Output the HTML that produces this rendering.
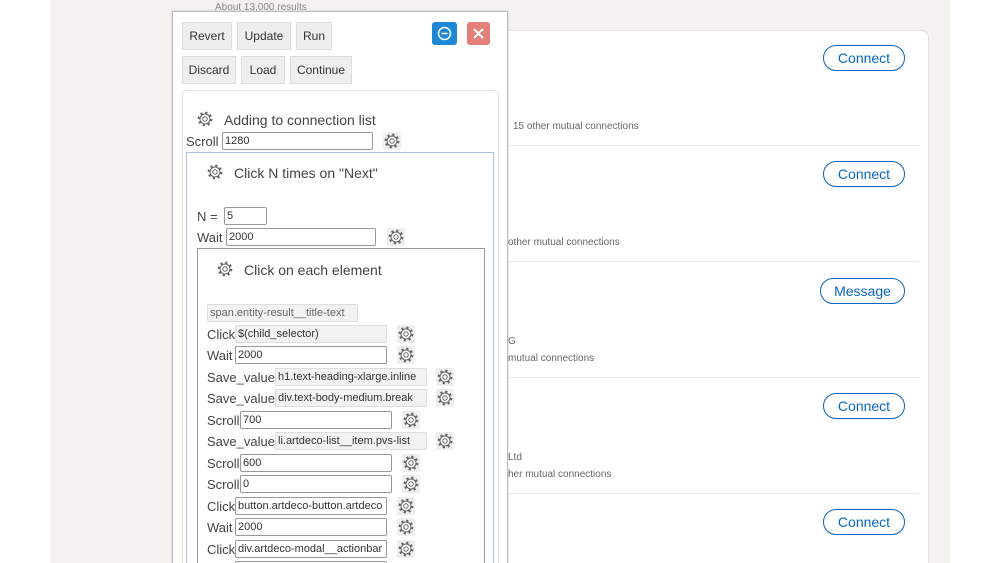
<!DOCTYPE html>
<html><head><meta charset="utf-8">
<style>
*{margin:0;padding:0;box-sizing:border-box}
html,body{width:1000px;height:563px;overflow:hidden}
body{background:#fff;position:relative;font-family:"Liberation Sans",sans-serif}
.a{position:absolute}
.bg{left:50px;top:0;width:900px;height:563px;background:#f3f2ef}
.card{left:180px;top:30px;width:749px;height:533px;background:#fff;border-radius:8px 8px 0 0;border:1px solid #e6e4e0;border-bottom:none}
.sep{height:1px;background:#e8e8e8;left:190px;width:729px}
.pill{border:1px solid #0a66c2;color:#0a66c2;border-radius:14px;font-size:14px;text-align:center;line-height:24px;height:26px}
.mut{font-size:10px;color:#666}
.panel{left:172px;top:11px;width:336px;height:560px;background:#fff;border:1px solid #bbb;box-shadow:0 0 2px rgba(0,0,0,.2)}
.btn{background:#eee;border:1px solid #ddd;font-size:12px;color:#333;text-align:center;line-height:26px;height:28px}
.t{font-size:13px;color:#444;white-space:nowrap}
.in{border:1px solid #999;height:18px;font-size:11px;color:#333;line-height:16px;padding-left:2px;background:#fff;overflow:hidden;white-space:nowrap;border-radius:2px}
.ing{background:#f2f2f2;border-color:#ddd}
.g{width:18px;height:18px;background:#eee;border-radius:2px}
</style></head><body>
<div class="a bg"></div>
<div class="a" style="left:215px;top:2px;font-size:10px;color:#888">About 13,000 results</div>
<div class="a card"></div>
<div class="a sep" style="top:145px"></div>
<div class="a sep" style="top:261px"></div>
<div class="a sep" style="top:377px"></div>
<div class="a sep" style="top:493px"></div>
<div class="a pill" style="left:823px;top:45px;width:82px">Connect</div>
<div class="a pill" style="left:823px;top:161px;width:82px">Connect</div>
<div class="a pill" style="left:820px;top:278px;width:85px">Message</div>
<div class="a pill" style="left:823px;top:393px;width:82px">Connect</div>
<div class="a pill" style="left:823px;top:509px;width:82px">Connect</div>
<div class="a mut" style="left:513px;top:121px">15 other mutual connections</div>
<div class="a mut" style="left:508px;top:237px">other mutual connections</div>
<div class="a mut" style="left:508px;top:336px">G</div>
<div class="a mut" style="left:508px;top:353px">mutual connections</div>
<div class="a mut" style="left:508px;top:452px">Ltd</div>
<div class="a mut" style="left:508px;top:469px">her mutual connections</div>

<div class="a panel"></div>
<svg width="0" height="0" style="position:absolute"><defs><g id="gear"><circle cx="9" cy="9" r="6.3" fill="none" stroke="#666" stroke-width="2.2" stroke-dasharray="2.2 2.75"/><circle cx="9" cy="9" r="5" fill="#fff" stroke="#666" stroke-width="1"/><circle cx="9" cy="9" r="2.2" fill="none" stroke="#666" stroke-width="1"/></g></defs></svg>
<div class="a btn" style="left:182px;top:22px;width:50px">Revert</div>
<div class="a btn" style="left:237px;top:22px;width:54px">Update</div>
<div class="a btn" style="left:296px;top:22px;width:36px">Run</div>
<div class="a btn" style="left:182px;top:56px;width:54px">Discard</div>
<div class="a btn" style="left:241px;top:56px;width:44px">Load</div>
<div class="a btn" style="left:290px;top:56px;width:62px">Continue</div>
<div class="a" style="left:432px;top:22px;width:25px;height:23px;background:#1e88d8;border-radius:3px"><svg width="25" height="23"><circle cx="12.5" cy="11.5" r="6" fill="none" stroke="#fff" stroke-width="1.5"/><line x1="9.5" y1="11.5" x2="15.5" y2="11.5" stroke="#fff" stroke-width="1.5"/></svg></div>
<div class="a" style="left:467px;top:22px;width:23px;height:23px;background:#e57f7a;border-radius:3px"><svg width="23" height="23"><path d="M7 7L16 16M16 7L7 16" stroke="#fff" stroke-width="2"/></svg></div>

<div class="a" style="left:182px;top:90px;width:317px;height:480px;border:1px solid #e4e4e4;border-radius:4px"></div>
<svg class="a" style="left:196px;top:110px" width="18" height="18"><use href="#gear"/></svg>
<div class="a t" style="left:224px;top:112px;font-size:14px">Adding to connection list</div>
<div class="a t" style="left:186px;top:134px">Scroll</div>
<div class="a in" style="left:222px;top:132px;width:151px">1280</div>
<div class="a g" style="left:383px;top:132px"><svg width="18" height="18"><use href="#gear"/></svg></div>

<div class="a" style="left:186px;top:152px;width:308px;height:420px;border:1px solid #a9c1e6"></div>
<svg class="a" style="left:206px;top:163px" width="18" height="18"><use href="#gear"/></svg>
<div class="a t" style="left:234px;top:165px;font-size:14px">Click N times on "Next"</div>
<div class="a t" style="left:197px;top:209px">N =</div>
<div class="a in" style="left:224px;top:207px;width:43px">5</div>
<div class="a t" style="left:197px;top:230px">Wait</div>
<div class="a in" style="left:226px;top:228px;width:150px">2000</div>
<div class="a g" style="left:387px;top:228px"><svg width="18" height="18"><use href="#gear"/></svg></div>

<div class="a" style="left:197px;top:248px;width:288px;height:330px;border:1px solid #999"></div>
<svg class="a" style="left:216px;top:260px" width="18" height="18"><use href="#gear"/></svg>
<div class="a t" style="left:244px;top:262px;font-size:14px">Click on each element</div>
<div class="a in ing" style="left:207px;top:304px;width:151px;color:#666">span.entity-result__title-text</div>

<div class="a t" style="left:207px;top:327px">Click</div><div class="a in ing" style="left:235px;top:325px;width:152px">$(child_selector)</div><div class="a g" style="left:397px;top:325px"><svg width="18" height="18"><use href="#gear"/></svg></div>
<div class="a t" style="left:207px;top:348px">Wait</div><div class="a in" style="left:235px;top:346px;width:152px">2000</div><div class="a g" style="left:397px;top:346px"><svg width="18" height="18"><use href="#gear"/></svg></div>
<div class="a t" style="left:207px;top:370px">Save_value</div><div class="a in ing" style="left:275px;top:368px;width:152px">h1.text-heading-xlarge.inline</div><div class="a g" style="left:436px;top:368px"><svg width="18" height="18"><use href="#gear"/></svg></div>
<div class="a t" style="left:207px;top:391px">Save_value</div><div class="a in ing" style="left:275px;top:389px;width:152px">div.text-body-medium.break</div><div class="a g" style="left:436px;top:389px"><svg width="18" height="18"><use href="#gear"/></svg></div>
<div class="a t" style="left:207px;top:413px">Scroll</div><div class="a in" style="left:240px;top:411px;width:152px">700</div><div class="a g" style="left:402px;top:411px"><svg width="18" height="18"><use href="#gear"/></svg></div>
<div class="a t" style="left:207px;top:434px">Save_value</div><div class="a in ing" style="left:275px;top:432px;width:152px">li.artdeco-list__item.pvs-list</div><div class="a g" style="left:436px;top:432px"><svg width="18" height="18"><use href="#gear"/></svg></div>
<div class="a t" style="left:207px;top:456px">Scroll</div><div class="a in" style="left:240px;top:454px;width:152px">600</div><div class="a g" style="left:402px;top:454px"><svg width="18" height="18"><use href="#gear"/></svg></div>
<div class="a t" style="left:207px;top:477px">Scroll</div><div class="a in" style="left:240px;top:475px;width:152px">0</div><div class="a g" style="left:402px;top:475px"><svg width="18" height="18"><use href="#gear"/></svg></div>
<div class="a t" style="left:207px;top:499px">Click</div><div class="a in" style="left:235px;top:497px;width:152px">button.artdeco-button.artdeco</div><div class="a g" style="left:397px;top:497px"><svg width="18" height="18"><use href="#gear"/></svg></div>
<div class="a t" style="left:207px;top:520px">Wait</div><div class="a in" style="left:235px;top:518px;width:152px">2000</div><div class="a g" style="left:397px;top:518px"><svg width="18" height="18"><use href="#gear"/></svg></div>
<div class="a t" style="left:207px;top:542px">Click</div><div class="a in" style="left:235px;top:540px;width:152px">div.artdeco-modal__actionbar</div><div class="a g" style="left:397px;top:540px"><svg width="18" height="18"><use href="#gear"/></svg></div>
<div class="a in" style="left:235px;top:561px;width:152px"></div>
</body></html>
